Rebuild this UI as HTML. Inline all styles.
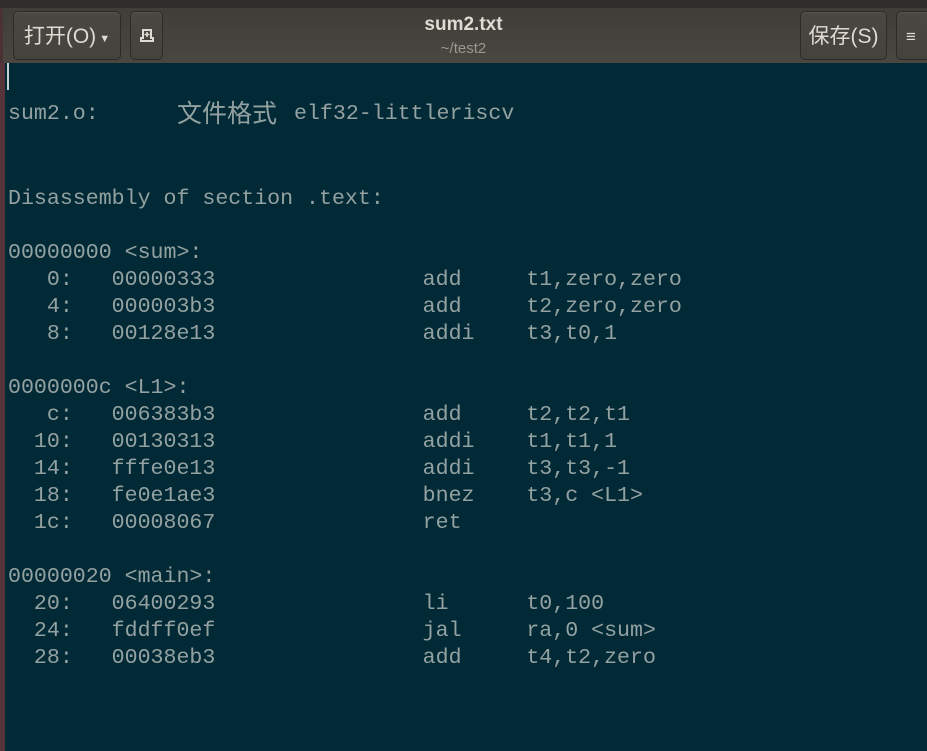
<!DOCTYPE html>
<html><head><meta charset="utf-8"><style>
html,body{margin:0;padding:0;width:927px;height:751px;overflow:hidden;background:#022a36}
#hdr{position:absolute;left:0;top:0;width:927px;height:63px;background:linear-gradient(#3e3c37,#4a4741);}
#strip{position:absolute;left:0;top:0;width:927px;height:8px;background:#2e2d2a}
.btn{position:absolute;top:11px;height:49px;border:1px solid #2c2b28;border-radius:5px;background:linear-gradient(#4a4843,#45423d);box-sizing:border-box;color:#dfdbd2;font-family:"Liberation Sans","Noto Sans CJK SC",sans-serif;font-size:21px;line-height:50px;text-align:center;box-shadow:inset 0 1px 0 rgba(255,255,255,0.06)}
#left{position:absolute;left:0;top:63px;width:5px;height:688px;background:#55353a}
#ledge{position:absolute;left:0;top:8px;width:3px;height:55px;background:#4a3233}
.l{position:absolute;left:8px;font-family:"Liberation Mono",monospace,monospace;font-size:21.6px;color:#93a1a1;white-space:pre;line-height:27px}
.c{position:absolute;font-family:"Noto Sans CJK SC",sans-serif;font-size:25px;color:#93a1a1;line-height:27px}
#cur{position:absolute;left:7px;top:63px;width:2px;height:27px;background:#c8d0d0}
</style></head><body>
<div id="hdr"></div><div id="strip"></div><div id="ledge"></div>
<div class="btn" style="left:13px;width:108px;">打开(O)<span style="font-size:11px;vertical-align:1px"> ▼</span></div>
<div class="btn" style="left:130px;width:33px;">
<svg width="16" height="16" viewBox="0 0 16 16" style="margin-top:16px;display:block;margin-left:8px"><path d="M4 2h8v8h2v3H2v-3h2z" fill="none" stroke="#dfdbd2" stroke-width="2"/><path d="M8 4v5M5.5 6.5h5" stroke="#dfdbd2" stroke-width="1.6"/></svg></div>
<div class="btn" style="left:800px;width:87px;">保存(S)</div>
<div class="btn" style="left:896px;width:40px;text-align:left;padding-left:9px;font-size:17px">≡</div>
<div style="position:absolute;left:0;width:927px;top:14px;text-align:center;font-family:'Liberation Sans',sans-serif;font-weight:bold;font-size:19px;color:#dfdbd2">sum2.txt</div>
<div style="position:absolute;left:0;width:927px;top:40px;text-align:center;font-family:'Liberation Sans',sans-serif;font-size:15px;color:#9c9890">~/test2</div>
<div id="left"></div>
<div id="cur"></div>
<div class="l" style="top:101px">sum2.o:</div>
<div class="c" style="left:177px;top:99px">文件格式</div>
<div class="l" style="left:294px;top:101px">elf32-littleriscv</div>
<div class="l" style="top:186px">Disassembly of section .text:</div>
<div class="l" style="top:240px">00000000 &lt;sum&gt;:
   0:   00000333                add     t1,zero,zero
   4:   000003b3                add     t2,zero,zero
   8:   00128e13                addi    t3,t0,1

0000000c &lt;L1&gt;:
   c:   006383b3                add     t2,t2,t1
  10:   00130313                addi    t1,t1,1
  14:   fffe0e13                addi    t3,t3,-1
  18:   fe0e1ae3                bnez    t3,c &lt;L1&gt;
  1c:   00008067                ret

00000020 &lt;main&gt;:
  20:   06400293                li      t0,100
  24:   fddff0ef                jal     ra,0 &lt;sum&gt;
  28:   00038eb3                add     t4,t2,zero</div>
</body></html>
